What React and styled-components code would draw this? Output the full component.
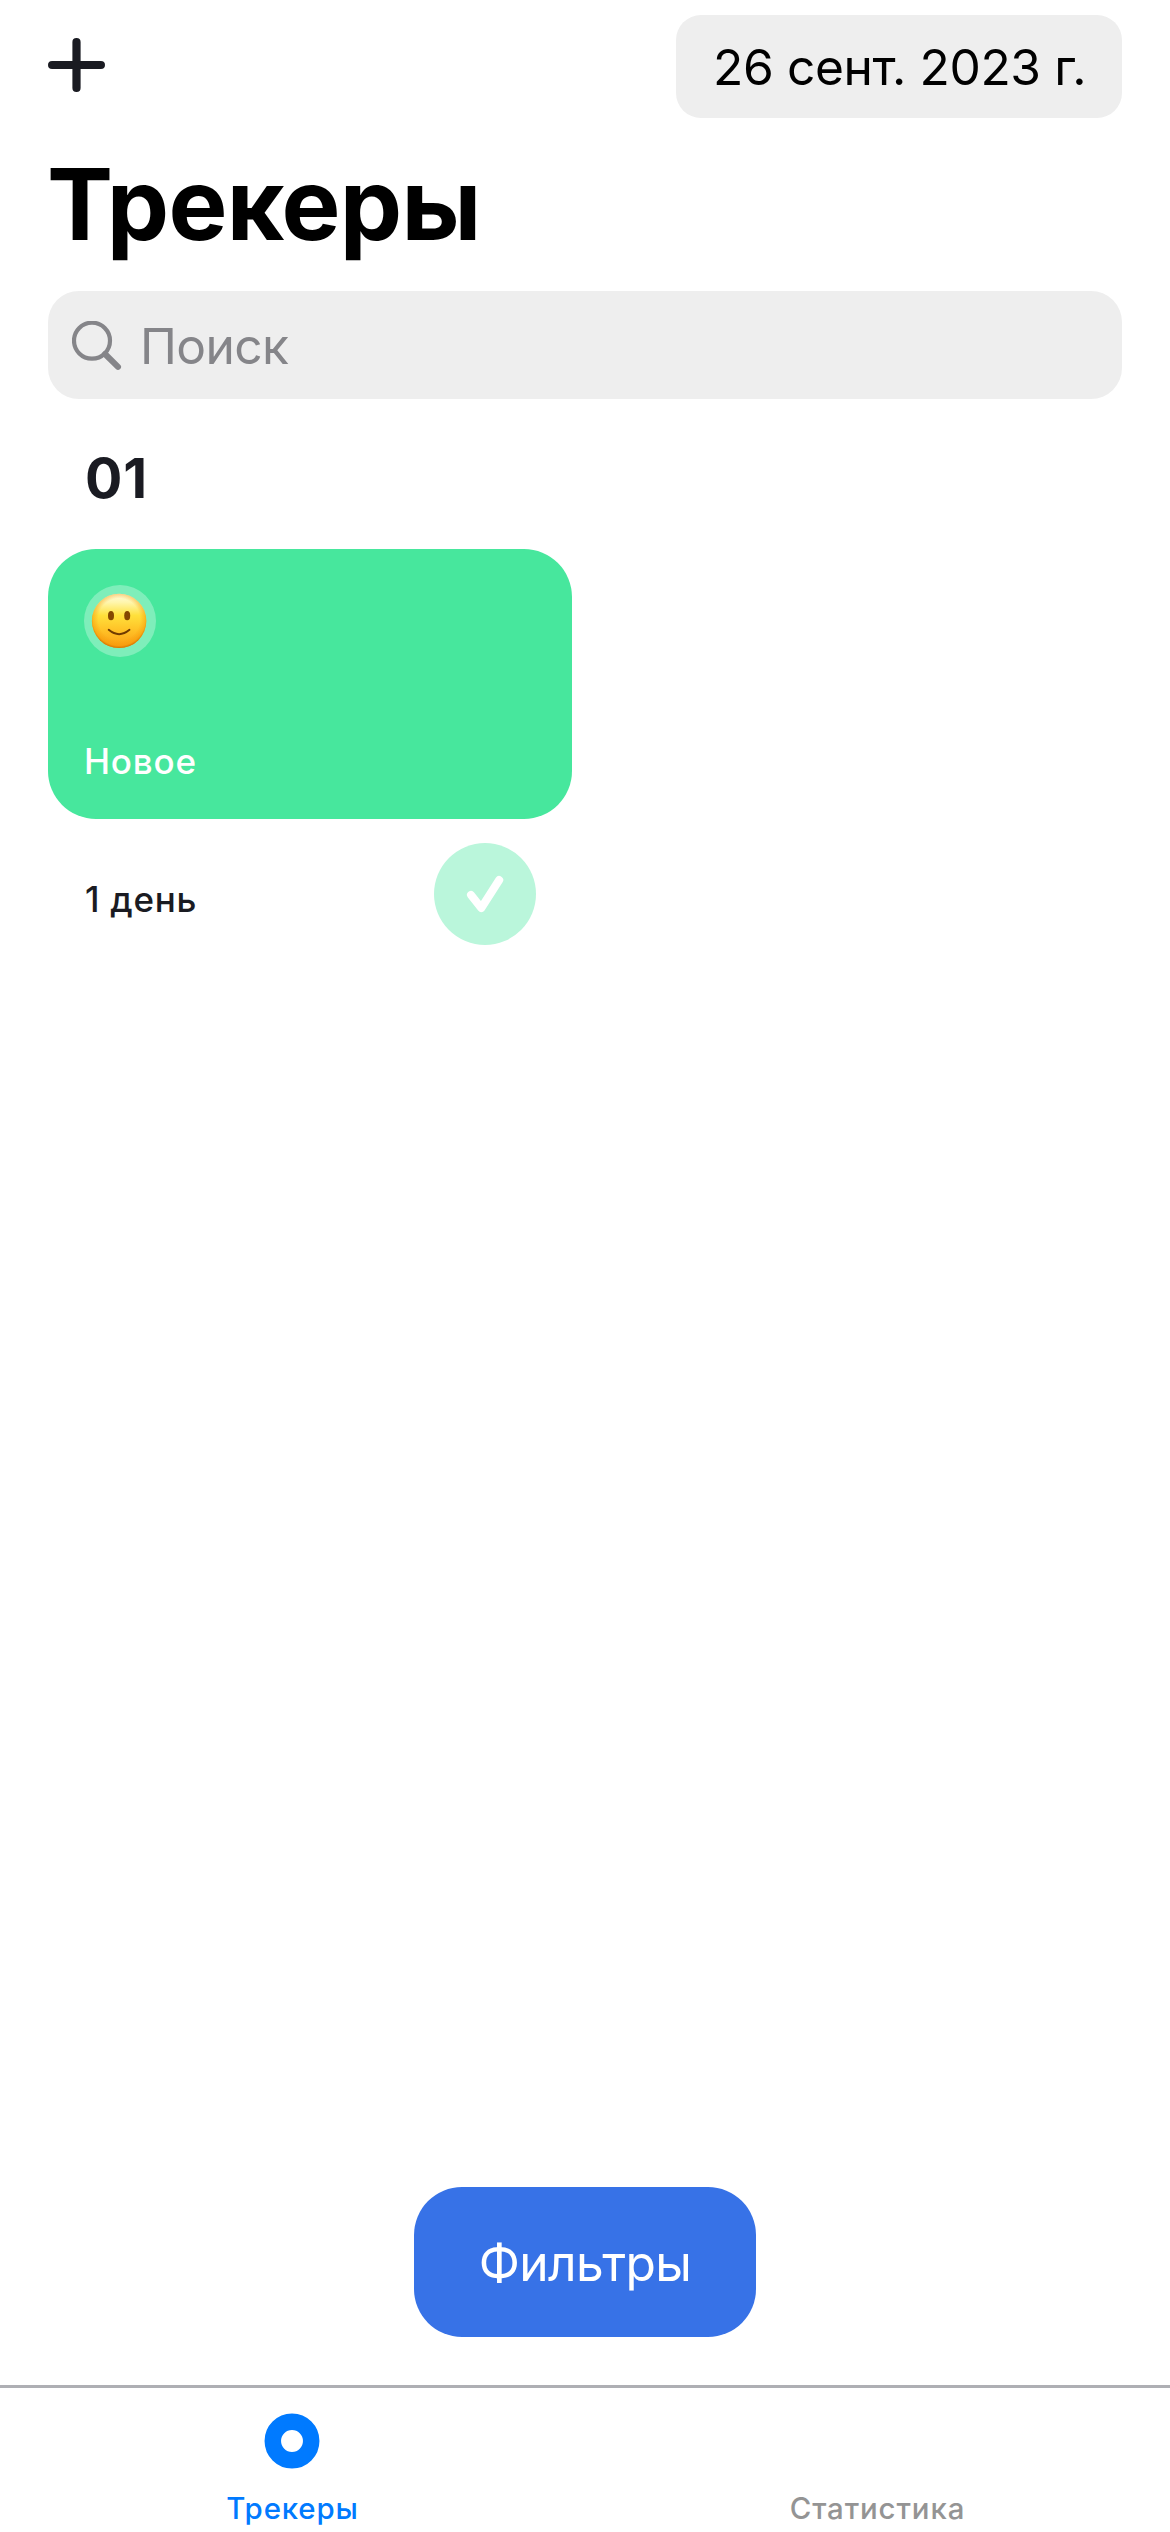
import React from "react";
import styled, { createGlobalStyle } from "styled-components";

const GlobalStyle = createGlobalStyle`
  * { box-sizing: border-box; }
  body { margin: 0; background: #fff; }
  button { border: 0; padding: 0; margin: 0; background: none; font: inherit; color: inherit; }
`;

const Screen = styled.div`
  width: 1170px;
  height: 2532px;
  display: flex;
  flex-direction: column;
  background: #fff;
  color: #1a1b22;
  font-family: Inter, "Liberation Sans", sans-serif;
  overflow: hidden;
`;

const Label = styled.span`
  font-size: ${(p) => p.$size}px;
  line-height: ${(p) => p.$line}px;
  font-weight: ${(p) => p.$weight || 400};
  letter-spacing: ${(p) => p.$track || 0}px;
  color: ${(p) => p.$color || "inherit"};
  white-space: nowrap;
`;

const Header = styled.header`
  display: flex;
  justify-content: space-between;
  align-items: flex-start;
  padding: 15px 48px 0;
`;

const AddButton = styled.button`
  width: 57px;
  height: 54px;
  margin-top: 23px;
  svg { display: block; }
`;

const DateChip = styled.div`
  width: 446px;
  height: 103px;
  padding: 1px 0 0 37px;
  border-radius: 25px;
  background: #eee;
`;

const Title = styled.h1`
  margin: 26px 0 0;
  padding-left: 47px;
  height: 120px;
  line-height: 0;
`;

const SearchField = styled.div`
  display: flex;
  align-items: flex-start;
  height: 108px;
  margin: 27px 48px 0;
  padding-left: 24px;
  border-radius: 31px;
  background: #eee;
  svg { display: block; margin-top: 30px; }
`;

const SearchText = styled.div`
  display: flex;
  padding: 1px 0 0 17px;
`;

const SectionTitle = styled.h2`
  display: flex;
  margin: 48px 0 0;
  padding-left: 85px;
  height: 61px;
`;

const Tracker = styled.article`
  width: 524px;
  margin: 41px 0 0 48px;
`;

const Card = styled.div`
  display: flex;
  flex-direction: column;
  justify-content: space-between;
  height: 270px;
  padding: 36px 36px 34px;
  border-radius: 48px;
  background: #47e79d;
`;

const EmojiBadge = styled.div`
  width: 72px;
  height: 72px;
  border-radius: 50%;
  background: rgba(255, 255, 255, 0.3);
  svg { display: block; }
`;

const CardFooter = styled.div`
  display: flex;
  justify-content: space-between;
  align-items: flex-start;
  padding: 24px 36px 0 36px;
`;

const Days = styled.div`
  display: flex;
  padding: 32px 0 0 1px;
`;

const DoneButton = styled.button`
  width: 102px;
  height: 102px;
  border-radius: 50%;
  background: #baf6db;
  svg { display: block; }
`;

const FilterButton = styled.button`
  width: 342px;
  height: 150px;
  margin: auto auto 48px;
  padding-top: 2px;
  border-radius: 48px;
  background: #3772e7;
`;

const TabBar = styled.nav`
  display: grid;
  grid-template-columns: 1fr 1fr;
  height: 147px;
  border-top: 3px solid #aeafb4;
`;

const Tab = styled.button`
  display: flex;
  flex-direction: column;
  align-items: center;
  justify-content: flex-end;
  padding-bottom: 3px;
`;

const TabIcon = styled.svg`
  display: block;
  margin: 0 1px 20px 0;
`;

const PlusIcon = () => (
  <svg width="57" height="54" viewBox="0 0 57 54" stroke="#1a1b22" strokeWidth="8.2" strokeLinecap="round">
    <path d="M4.1 27H52.9M28.5 4.1V49.9" />
  </svg>
);

const SearchIcon = () => (
  <svg width="51" height="51" viewBox="0 0 51 51" fill="none" stroke="#858589">
    <circle cx="20" cy="19.7" r="18" strokeWidth="4.2" />
    <path d="M33 33L46 45.8" strokeWidth="6" strokeLinecap="round" />
  </svg>
);

const SmileIcon = () => (
  <svg width="72" height="72" viewBox="0 0 72 72">
    <defs>
      <linearGradient id="face" x1="0" y1="0" x2="0" y2="1">
        <stop offset="0" stopColor="#fffbe0" />
        <stop offset="0.16" stopColor="#fff6ac" />
        <stop offset="0.4" stopColor="#ffe03b" />
        <stop offset="0.68" stopColor="#ffc126" />
        <stop offset="1" stopColor="#fb9b12" />
      </linearGradient>
      <radialGradient id="rim" cx="0.5" cy="0.47" r="0.53">
        <stop offset="0.72" stopColor="#f59a08" stopOpacity="0" />
        <stop offset="0.91" stopColor="#f59a08" stopOpacity="0.5" />
        <stop offset="1" stopColor="#cf6c00" stopOpacity="1" />
      </radialGradient>
    </defs>
    <circle cx="35.1" cy="35.9" r="27.2" fill="url(#face)" />
    <circle cx="35.1" cy="35.9" r="27.2" fill="url(#rim)" />
    <ellipse cx="27" cy="30.7" rx="3" ry="4.6" fill="#844700" />
    <ellipse cx="43.2" cy="30.7" rx="3" ry="4.6" fill="#844700" />
    <path d="M24.7 44.8Q35.1 53.5 45.5 44.8" fill="none" stroke="#703a00" strokeWidth="1.9" strokeLinecap="round" />
  </svg>
);

const CheckIcon = () => (
  <svg width="102" height="102" viewBox="0 0 102 102" fill="none" stroke="#fff" strokeWidth="8" strokeLinecap="round" strokeLinejoin="round">
    <path d="M37 52L47.3 65L65.2 37" />
  </svg>
);

export default function App() {
  return (
    <>
      <GlobalStyle />
      <Screen>
        <Header>
          <AddButton aria-label="Добавить"><PlusIcon /></AddButton>
          <DateChip>
            <Label $size={49.7} $line={103} $track={-0.4} $color="#000">26 сент. 2023 г.</Label>
          </DateChip>
        </Header>
        <Title>
          <Label $size={99} $line={120} $weight={700} $track={-0.7} $color="#000">Трекеры</Label>
        </Title>
        <SearchField>
          <SearchIcon />
          <SearchText>
            <Label $size={49.7} $line={108} $track={-0.6} $color="#858589">Поиск</Label>
          </SearchText>
        </SearchField>
        <SectionTitle>
          <Label $size={55.4} $line={61} $weight={700} $track={0.8}>01</Label>
        </SectionTitle>
        <Tracker>
          <Card>
            <EmojiBadge><SmileIcon /></EmojiBadge>
            <Label $size={35} $line={48} $weight={500} $track={0.8} $color="#fff">Новое</Label>
          </Card>
          <CardFooter>
            <Days>
              <Label $size={35} $line={48} $weight={500} $track={0.7}>1 день</Label>
            </Days>
            <DoneButton aria-label="Выполнено"><CheckIcon /></DoneButton>
          </CardFooter>
        </Tracker>
        <FilterButton>
          <Label $size={49.7} $line={148} $track={-0.6} $color="#fff">Фильтры</Label>
        </FilterButton>
        <TabBar>
          <Tab>
            <TabIcon width="56" height="56" viewBox="0 0 56 56">
              <circle cx="28" cy="28" r="19.2" fill="none" stroke="#007aff" strokeWidth="16.5" />
            </TabIcon>
            <Label $size={29.4} $line={40} $weight={500} $track={0.9} $color="#007aff">Трекеры</Label>
          </Tab>
          <Tab>
            <Label $size={29.4} $line={40} $weight={500} $track={0.9} $color="#949494">Статистика</Label>
          </Tab>
        </TabBar>
      </Screen>
    </>
  );
}
